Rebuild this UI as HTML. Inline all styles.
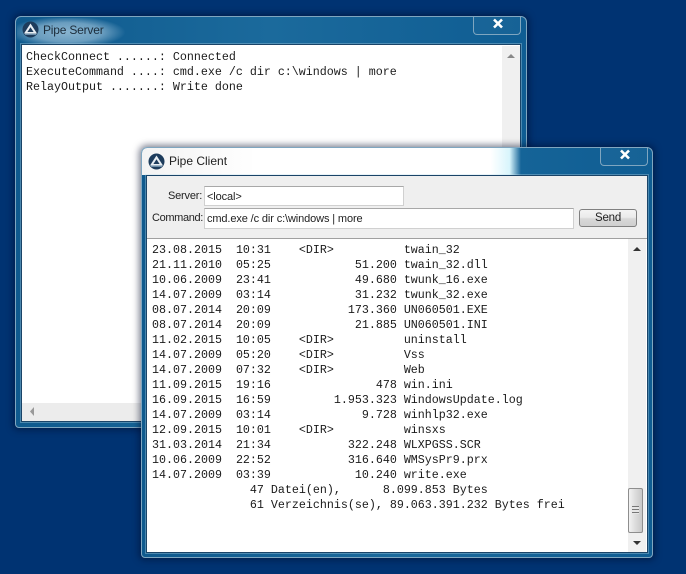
<!DOCTYPE html>
<html><head><meta charset="utf-8"><style>
html,body{margin:0;padding:0}
body{width:686px;height:574px;position:relative;overflow:hidden;background:#003372;font-family:"Liberation Sans",sans-serif;color:#111}
.a{position:absolute}
.win{position:absolute;box-sizing:border-box;border:1px solid #7fa6c0;border-radius:6px 6px 4px 4px;background:linear-gradient(90deg,#0f5a8e,#1b6a9c 50%,#0f5d93);box-shadow:0 0 7px 2px rgba(0,10,40,.5)}
pre{position:absolute;margin:0;font:11.67px/15px "Liberation Mono",monospace;color:#1a1a1a;white-space:pre}
.client{position:absolute;background:#fff;outline:1px solid #1a4468;box-shadow:0 0 0 2px rgba(190,220,235,.35)}
.title{position:absolute;font-size:12px;color:#222;white-space:nowrap}
.close{position:absolute;box-sizing:border-box;border:1px solid #7fa6c0;border-top:none;border-radius:0 0 4px 4px;background:rgba(255,255,255,.03);width:48px;height:19px}
.close svg{position:absolute;left:18px;top:2px}
.sb{position:absolute;background:#f0f0f0}
.inp{position:absolute;box-sizing:border-box;background:#fff;border:1px solid #d0d0d0;border-top-color:#a8a8a8;font-size:11px;letter-spacing:-.12px;line-height:20px;padding-left:2px;white-space:nowrap;color:#222}
</style></head><body>

<!-- Server window -->
<div class="win" style="left:15px;top:16px;width:512px;height:412px"></div>
<div class="a" style="left:17px;top:18px;width:112px;height:26px;background:radial-gradient(ellipse 58px 16px at 45% 55%,rgba(165,200,222,.8),rgba(165,200,222,.6) 60%,rgba(165,200,222,0))"></div>
<svg class="a" style="left:22px;top:21px" width="17" height="17" viewBox="0 0 17 17"><circle cx="8.5" cy="8.5" r="8" fill="#1d3c5c"/><path d="M8.5 2.5 L15 12.5 H2 Z" fill="#e8eef3"/><path d="M8.5 6.2 L11.6 11 H5.4 Z" fill="#1d3c5c"/><path d="M3 13.2h11" stroke="#8fb0c8"/></svg>
<div class="title" style="left:43px;top:23px;color:#1c2c3a;letter-spacing:-.2px">Pipe Server</div>
<div class="close" style="left:473px;top:16px"><svg width="12" height="11" viewBox="0 0 12 11"><path d="M2 1.5 L10 9.5 M10 1.5 L2 9.5" stroke="#fff" stroke-width="2.6"/></svg></div>
<div class="client" style="left:22px;top:45px;width:498px;height:376px"></div>
<div class="sb" style="left:502px;top:46px;width:18px;height:375px"></div>
<svg class="a" style="left:507px;top:53px" width="8" height="6"><path d="M0 5 L4 1 L8 5Z" fill="#888"/></svg>
<div class="sb" style="left:22px;top:403px;width:480px;height:18px;background:#ececec"></div>
<svg class="a" style="left:29px;top:407px" width="6" height="9"><path d="M5 0 L1 4.5 L5 9Z" fill="#999"/></svg>
<pre style="left:26px;top:50px">CheckConnect ......: Connected
ExecuteCommand ....: cmd.exe /c dir c:\windows | more
RelayOutput .......: Write done</pre>

<!-- Client window -->
<div class="win" style="left:141px;top:147px;width:512px;height:411px"></div>
<div class="a" style="left:142px;top:148px;width:379px;height:27px;background:linear-gradient(90deg,#f3f3f3,#fff 30%,#fff 92%,#d8f5fc 97%,rgba(180,235,250,0));border-radius:5px 0 0 0"></div>
<svg class="a" style="left:148px;top:153px" width="17" height="17" viewBox="0 0 17 17"><circle cx="8.5" cy="8.5" r="8" fill="#1d3c5c"/><path d="M8.5 2.5 L15 12.5 H2 Z" fill="#e8eef3"/><path d="M8.5 6.2 L11.6 11 H5.4 Z" fill="#1d3c5c"/><path d="M3 13.2h11" stroke="#8fb0c8"/></svg>
<div class="title" style="left:169px;top:154px">Pipe Client</div>
<div class="close" style="left:600px;top:147px"><svg width="12" height="11" viewBox="0 0 12 11"><path d="M2 1.5 L10 9.5 M10 1.5 L2 9.5" stroke="#fff" stroke-width="2.6"/></svg></div>
<div class="client" style="left:147px;top:176px;width:500px;height:376px;background:#efefef"></div>
<div class="title" style="left:168px;top:190px;font-size:11px;letter-spacing:-.2px">Server:</div>
<div class="title" style="left:152px;top:212px;font-size:11px;letter-spacing:-.35px">Command:</div>
<div class="inp" style="left:204px;top:186px;width:200px;height:20px">&lt;local&gt;</div>
<div class="inp" style="left:204px;top:208px;width:370px;height:21px">cmd.exe /c dir c:\windows | more</div>
<div class="a" style="left:579px;top:209px;width:58px;height:18px;box-sizing:border-box;border:1px solid #808080;border-radius:3px;background:linear-gradient(#f4f4f4,#ebebeb 45%,#d8d8d8 55%,#cfcfcf);font-size:11.5px;letter-spacing:-.2px;line-height:17px;text-align:center;color:#222">Send</div>
<div class="a" style="left:147px;top:238px;width:500px;height:314px;background:#fff;border-top:1px solid #a0a0a0;box-sizing:border-box"></div>
<div class="sb" style="left:628px;top:239px;width:18px;height:313px"></div>
<svg class="a" style="left:633px;top:246px" width="8" height="6"><path d="M0 5 L4 1 L8 5Z" fill="#333"/></svg>
<svg class="a" style="left:633px;top:540px" width="8" height="6"><path d="M0 1 L8 1 L4 5Z" fill="#333"/></svg>
<div class="a" style="left:628px;top:488px;width:15px;height:45px;box-sizing:border-box;border:1px solid #8e8e8e;border-radius:2px;background:linear-gradient(90deg,#f2f2f2,#dcdcdc 50%,#c8c8c8)"></div>
<div class="a" style="left:632px;top:506px;width:7px;height:8px;background:repeating-linear-gradient(#777 0 1px,#e6e6e6 1px 3px)"></div>
<pre style="left:152px;top:243px">23.08.2015  10:31    &lt;DIR&gt;          twain_32
21.11.2010  05:25            51.200 twain_32.dll
10.06.2009  23:41            49.680 twunk_16.exe
14.07.2009  03:14            31.232 twunk_32.exe
08.07.2014  20:09           173.360 UN060501.EXE
08.07.2014  20:09            21.885 UN060501.INI
11.02.2015  10:05    &lt;DIR&gt;          uninstall
14.07.2009  05:20    &lt;DIR&gt;          Vss
14.07.2009  07:32    &lt;DIR&gt;          Web
11.09.2015  19:16               478 win.ini
16.09.2015  16:59         1.953.323 WindowsUpdate.log
14.07.2009  03:14             9.728 winhlp32.exe
12.09.2015  10:01    &lt;DIR&gt;          winsxs
31.03.2014  21:34           322.248 WLXPGSS.SCR
10.06.2009  22:52           316.640 WMSysPr9.prx
14.07.2009  03:39            10.240 write.exe
              47 Datei(en),      8.099.853 Bytes
              61 Verzeichnis(se), 89.063.391.232 Bytes frei</pre>
</body></html>
